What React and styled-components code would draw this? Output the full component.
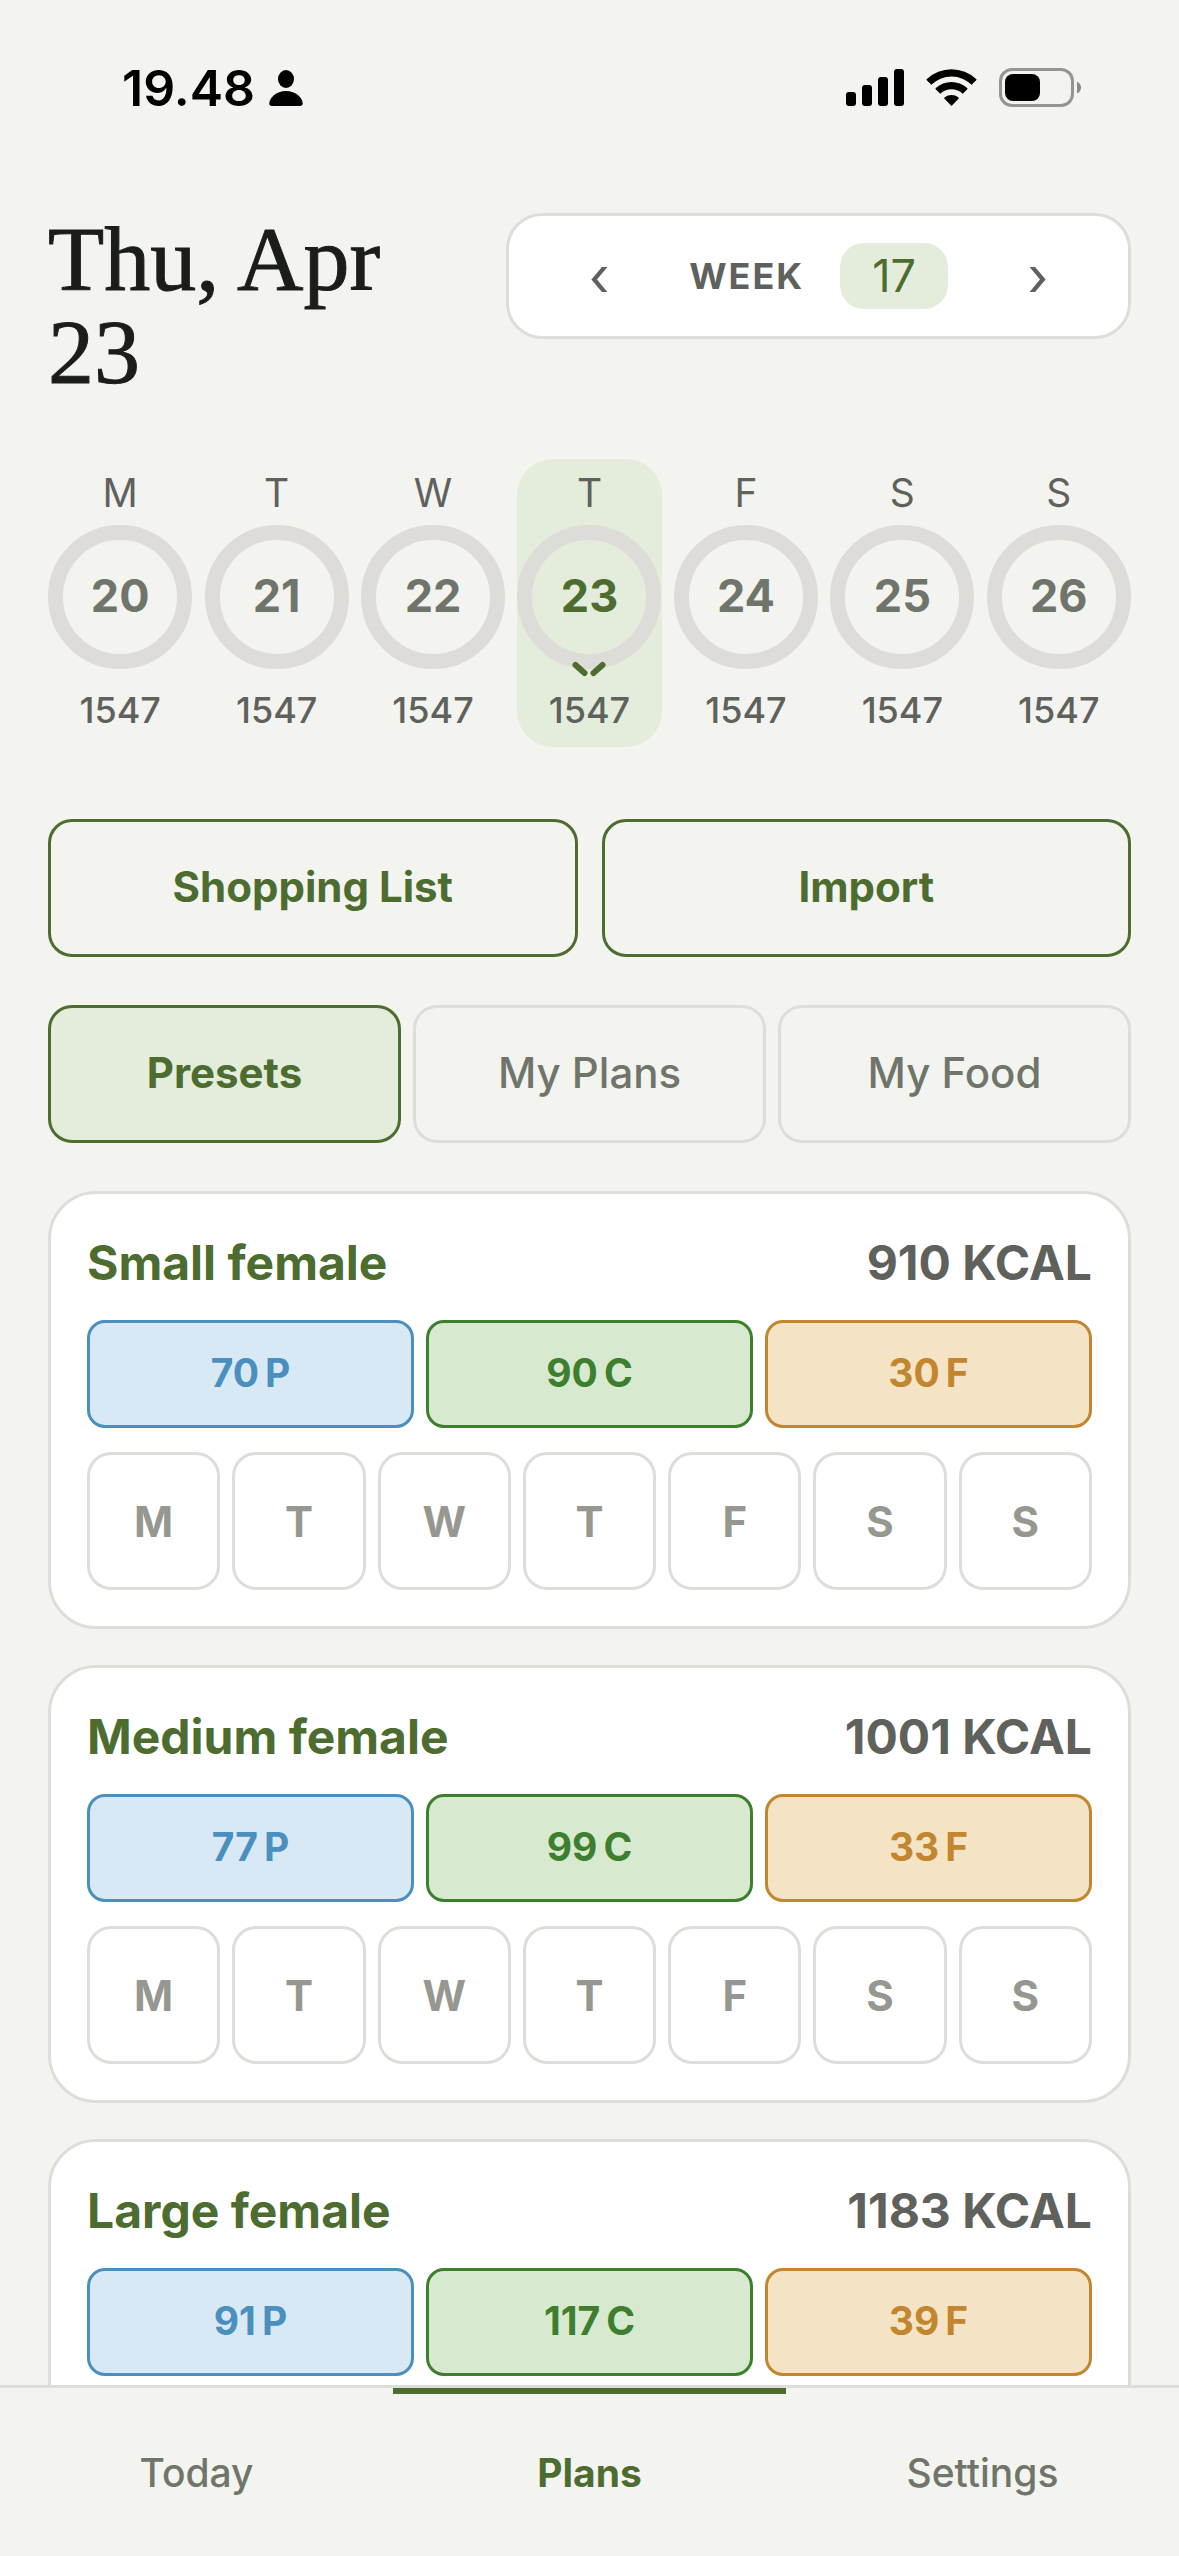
import React, { useState } from "react";
import styled, { createGlobalStyle } from "styled-components";

const weekDays = [
  { letter: "M", date: 20, kcal: 1547 },
  { letter: "T", date: 21, kcal: 1547 },
  { letter: "W", date: 22, kcal: 1547 },
  { letter: "T", date: 23, kcal: 1547 },
  { letter: "F", date: 24, kcal: 1547 },
  { letter: "S", date: 25, kcal: 1547 },
  { letter: "S", date: 26, kcal: 1547 }
];

const presets = [
  { name: "Small female", kcal: 910, protein: 70, carbs: 90, fat: 30 },
  { name: "Medium female", kcal: 1001, protein: 77, carbs: 99, fat: 33 },
  { name: "Large female", kcal: 1183, protein: 91, carbs: 117, fat: 39 }
];

const tabs = ["Presets", "My Plans", "My Food"];
const pages = ["Today", "Plans", "Settings"];

const StatusBar = () => (
  <StatusBarStyled>
    <Clock>
      19.48
      <svg width="34" height="36" viewBox="0 0 34 36">
        <ellipse cx="17" cy="9" rx="8" ry="9" />
        <path d="M3 36C1.200 36 0.300 35 0.300 33.500C0.300 28 7 21 17 21S33.700 28 33.700 33.500C33.700 35 32.800 36 31 36Z" />
      </svg>
    </Clock>
    <svg width="236" height="40" viewBox="0 0 236 40">
      <rect x="0" y="24" width="10" height="14" rx="3" />
      <rect x="16" y="17" width="10" height="21" rx="3" />
      <rect x="32" y="9" width="10" height="29" rx="3" />
      <rect x="48" y="1" width="10" height="37" rx="3" />
      <path d="M85.300 16.800L80.800 12.300Q80.200 11.600 80.900 11A36 36 0 0 1 130.100 11Q130.800 11.600 130.200 12.300L125.700 16.800A29 29 0 0 0 85.300 16.800Z" />
      <path d="M94.200 25.700L89.700 21.200Q89.200 20.600 89.800 20A23.500 23.500 0 0 1 121.200 20Q121.800 20.600 121.300 21.200L116.800 25.700A16.300 16.300 0 0 0 94.200 25.700Z" />
      <path d="M105.500 38L98.500 30.800Q97.900 30 98.700 29.200A11.500 11.500 0 0 1 112.300 29.200Q113.100 30 112.500 30.800Z" />
      <rect x="154.500" y="1.500" width="72" height="36" rx="11.500" fill="none" stroke="#949590" strokeWidth="3" />
      <rect x="159" y="6" width="35" height="27" rx="8" />
      <path d="M231 13.500Q235 15.500 235 19.500T231 25.500Z" fill="#8b8c88" />
    </svg>
  </StatusBarStyled>
);

const PresetCard = ({ preset }) => (
  <Card>
    <CardTitle>
      <h2>{preset.name}</h2>
      <span>{preset.kcal} KCAL</span>
    </CardTitle>
    <Macros>
      <Macro $color="#4a8fbe" $background="#d8e9f5"><span>{preset.protein}</span><span>P</span></Macro>
      <Macro $color="#3d7f2e" $background="#d7eacf"><span>{preset.carbs}</span><span>C</span></Macro>
      <Macro $color="#c2862f" $background="#f5e3c6"><span>{preset.fat}</span><span>F</span></Macro>
    </Macros>
    <DayButtons>
      {weekDays.map((day) => (
        <DayButton key={day.date} type="button">{day.letter}</DayButton>
      ))}
    </DayButtons>
  </Card>
);

const App = () => {
  const [selected, setSelected] = useState(23);
  const [tab, setTab] = useState("Presets");
  const [page, setPage] = useState("Plans");

  return (
    <Screen>
      <GlobalStyle />
      <StatusBar />
      <Content>
        <Header>
          <h1>Thu, Apr 23</h1>
          <WeekPicker>
            <ArrowButton type="button" aria-label="Previous week">‹</ArrowButton>
            <WeekLabel>
              WEEK
              <WeekNumber>17</WeekNumber>
            </WeekLabel>
            <ArrowButton type="button" aria-label="Next week">›</ArrowButton>
          </WeekPicker>
        </Header>
        <Days>
          {weekDays.map((day) => (
            <Day key={day.date} type="button" $active={day.date === selected} onClick={() => setSelected(day.date)}>
              <DayLetter>{day.letter}</DayLetter>
              <Ring $active={day.date === selected}>
                {day.date}
                {day.date === selected && (
                  <svg width="34" height="16" viewBox="0 0 34 16">
                    <path d="M3.500 4L12.500 12M21.500 12L30.500 4" />
                  </svg>
                )}
              </Ring>
              <DayKcal>{day.kcal}</DayKcal>
            </Day>
          ))}
        </Days>
        <Actions>
          <ActionButton type="button">Shopping List</ActionButton>
          <ActionButton type="button">Import</ActionButton>
        </Actions>
        <Tabs>
          {tabs.map((value) => (
            <TabButton key={value} type="button" $active={value === tab} onClick={() => setTab(value)}>{value}</TabButton>
          ))}
        </Tabs>
        <Cards>
          {presets.map((preset) => (
            <PresetCard key={preset.name} preset={preset} />
          ))}
        </Cards>
      </Content>
      <BottomNav>
        {pages.map((value) => (
          <NavButton key={value} type="button" $active={value === page} onClick={() => setPage(value)}>{value}</NavButton>
        ))}
      </BottomNav>
    </Screen>
  );
};

export default App;

const GlobalStyle = createGlobalStyle`
  * {
    box-sizing: border-box;
  }
  body {
    margin: 0;
    background-color: #f3f4ef;
    font-family: Inter, "Liberation Sans", sans-serif;
    color: #5f615d;
  }
  h1, h2 {
    margin: 0;
  }
  button {
    padding: 0;
    border: none;
    background: none;
    font: inherit;
    color: inherit;
    cursor: pointer;
  }
`;

const Screen = styled.div`
  height: 100vh;
  display: flex;
  flex-direction: column;
`;

const StatusBarStyled = styled.div`
  flex: none;
  height: 176px;
  padding: 0 97px 0 122px;
  display: flex;
  align-items: center;
  justify-content: space-between;
  color: #000;
`;

const Clock = styled.div`
  display: flex;
  align-items: center;
  gap: 14px;
  font-size: 50px;
  font-weight: 600;
`;

const Content = styled.main`
  flex: 1;
  min-height: 0;
  padding: 37px 48px 0;
  overflow-y: auto;
  scrollbar-width: none;
`;

const Header = styled.header`
  display: flex;
  align-items: flex-start;
  justify-content: space-between;
  gap: 24px;
  margin-bottom: 60px;
  h1 {
    font-family: "Liberation Serif", serif;
    font-size: 92px;
    line-height: 93px;
    font-weight: 400;
    color: #1b1d19;
    -webkit-text-stroke: 1px #1b1d19;
  }
`;

const WeekPicker = styled.div`
  flex: none;
  height: 126px;
  padding: 0 24px;
  display: flex;
  align-items: center;
  gap: 24px;
  background-color: #fff;
  border: 3px solid #dddeda;
  border-radius: 36px;
`;

const ArrowButton = styled.button`
  width: 132px;
  height: 120px;
  font-size: 54px;
`;

const WeekLabel = styled.div`
  display: flex;
  align-items: center;
  gap: 36px;
  font-size: 36px;
  font-weight: 700;
  letter-spacing: 2px;
`;

const WeekNumber = styled.span`
  padding: 0 32px;
  line-height: 66px;
  border-radius: 24px;
  background-color: #e4eddb;
  color: #4d6c2f;
  font-size: 45px;
  font-weight: 400;
  letter-spacing: normal;
`;

const Days = styled.div`
  display: grid;
  grid-template-columns: repeat(7, 1fr);
  gap: 12px;
  margin-bottom: 72px;
`;

const Day = styled.button`
  padding: 12px 0 15px;
  display: flex;
  flex-direction: column;
  align-items: center;
  border-radius: 36px;
  background-color: ${({ $active }) => ($active ? "#e4eddb" : "transparent")};
`;

const DayLetter = styled.span`
  font-size: 39px;
  line-height: 44px;
`;

const Ring = styled.span`
  position: relative;
  width: 144px;
  height: 144px;
  margin: 10px 0 19px;
  padding-bottom: 3px;
  display: flex;
  align-items: center;
  justify-content: center;
  border: 15px solid #dddcd8;
  border-radius: 50%;
  font-size: 45px;
  font-weight: 700;
  color: ${({ $active }) => ($active ? "#4d6c2f" : "#70756c")};
  svg {
    position: absolute;
    left: 40px;
    bottom: -23px;
    fill: none;
    stroke: #4d6c2f;
    stroke-width: 6;
    stroke-linecap: round;
  }
`;

const DayKcal = styled.span`
  font-size: 36px;
  line-height: 44px;
  font-weight: 500;
`;

const Actions = styled.div`
  display: grid;
  grid-template-columns: repeat(2, 1fr);
  gap: 24px;
  margin-bottom: 48px;
`;

const ActionButton = styled.button`
  height: 138px;
  padding-bottom: 3px;
  border: 3px solid #4d6c2f;
  border-radius: 24px;
  font-size: 42px;
  font-weight: 700;
  color: #4d6c2f;
`;

const Tabs = styled.div`
  display: grid;
  grid-template-columns: repeat(3, 1fr);
  gap: 12px;
  margin-bottom: 48px;
`;

const TabButton = styled.button`
  height: 138px;
  padding-bottom: 3px;
  border: 3px solid ${({ $active }) => ($active ? "#4d6c2f" : "#dddeda")};
  border-radius: 24px;
  background-color: ${({ $active }) => ($active ? "#e4eddb" : "transparent")};
  font-size: 42px;
  font-weight: ${({ $active }) => ($active ? 700 : 500)};
  color: ${({ $active }) => ($active ? "#4d6c2f" : "#70756c")};
`;

const Cards = styled.div`
  display: flex;
  flex-direction: column;
  gap: 36px;
  padding-bottom: 36px;
`;

const Card = styled.section`
  padding: 36px;
  display: flex;
  flex-direction: column;
  gap: 24px;
  background-color: #fff;
  border: 3px solid #dddeda;
  border-radius: 48px;
`;

const CardTitle = styled.div`
  display: flex;
  justify-content: space-between;
  font-size: 48px;
  line-height: 66px;
  font-weight: 700;
  h2 {
    font: inherit;
    color: #4d6c2f;
  }
`;

const Macros = styled.div`
  display: grid;
  grid-template-columns: repeat(3, 1fr);
  gap: 12px;
`;

const Macro = styled.div`
  height: 108px;
  padding-bottom: 3px;
  display: flex;
  align-items: center;
  justify-content: center;
  gap: 6px;
  border: 3px solid ${({ $color }) => $color};
  border-radius: 18px;
  background-color: ${({ $background }) => $background};
  color: ${({ $color }) => $color};
  font-size: 39px;
  font-weight: 700;
`;

const DayButtons = styled.div`
  display: grid;
  grid-template-columns: repeat(7, 1fr);
  gap: 12px;
`;

const DayButton = styled.button`
  height: 138px;
  border: 3px solid #dddeda;
  border-radius: 24px;
  font-size: 42px;
  font-weight: 700;
  color: #969790;
`;

const BottomNav = styled.nav`
  flex: none;
  height: 171px;
  display: grid;
  grid-template-columns: repeat(3, 1fr);
  border-top: 3px solid #dddeda;
`;

const NavButton = styled.button`
  padding-bottom: 6px;
  border-top: 6px solid ${({ $active }) => ($active ? "#4d6c2f" : "transparent")};
  font-size: 39px;
  font-weight: ${({ $active }) => ($active ? 700 : 500)};
  color: ${({ $active }) => ($active ? "#4d6c2f" : "#70756c")};
`;
